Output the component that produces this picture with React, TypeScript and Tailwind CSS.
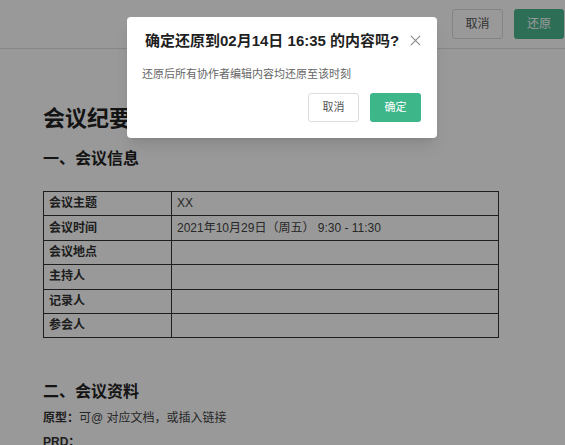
import React from 'react';

const rows = [
  { label: '会议主题', value: 'XX' },
  { label: '会议时间', value: '2021年10月29日（周五） 9:30 - 11:30' },
  { label: '会议地点', value: '' },
  { label: '主持人', value: '' },
  { label: '记录人', value: '' },
  { label: '参会人', value: '' },
];

export default function App() {
  return (
    <div
      className="relative w-[565px] h-[445px] overflow-hidden bg-white text-[#333]"
      style={{ fontFamily: '"Liberation Sans", "Noto Sans CJK SC", sans-serif' }}
    >
      {/* Top bar */}
      <div className="flex h-[49px] items-center justify-end gap-[11px] border-b border-[#e2e2e2] bg-white pr-[1px]">
        <button className="h-[30px] w-[51px] rounded-[3px] border border-[#ddd] bg-white text-[12px] text-[#555]">
          取消
        </button>
        <button className="h-[30px] w-[50px] rounded-[3px] bg-[#4cb890] text-[12px] text-white">
          还原
        </button>
      </div>

      {/* Document */}
      <div className="px-[43px] pt-[55px]">
        <h1 className="text-[22px] font-bold leading-[30px] text-[#222]">会议纪要</h1>
        <h2 className="mt-[13px] text-[16px] font-bold leading-[24px] text-[#222]">一、会议信息</h2>
        <table className="mt-[20px] w-[456px] border-collapse text-[12px]">
          <tbody>
            {rows.map((r) => (
              <tr key={r.label}>
                <td className="h-[24.4px] w-[128px] border border-[#333] px-[5px] py-0 font-bold leading-[23px]">{r.label}</td>
                <td className="h-[24.4px] border border-[#333] px-[5px] py-0 leading-[23px] text-[#444]">{r.value}</td>
              </tr>
            ))}
          </tbody>
        </table>
        <h2 className="mt-[42px] text-[16px] font-bold leading-[24px] text-[#222]">二、会议资料</h2>
        <p className="mt-[3px] text-[12px] leading-[22px] text-[#444]">
          <span className="font-bold text-[#333]">原型：</span>可@ 对应文档，或插入链接
        </p>
        <p className="mt-[2px] text-[12px] font-bold leading-[22px] text-[#333]">PRD：</p>
      </div>

      {/* Overlay */}
      <div className="absolute inset-0 bg-black/40" />

      {/* Dialog */}
      <div className="absolute left-[127px] top-[17px] w-[310px] h-[121px] rounded-[4px] bg-white shadow-lg">
        <div className="flex items-center justify-between pl-[18px] pr-[16px] pt-[12px]">
          <div className="whitespace-nowrap text-[15px] font-bold leading-[24px] text-[#1f1f1f]">确定还原到02月14日 16:35 的内容吗?</div>
          <svg width="11" height="11" viewBox="0 0 12 12" className="mt-[-2px]">
            <path d="M1 1L11 11M11 1L1 11" stroke="#888" strokeWidth="1.2" />
          </svg>
        </div>
        <p className="mt-[13px] pl-[15px] text-[11px] leading-[16px] text-[#666]">还原后所有协作者编辑内容均还原至该时刻</p>
        <div className="mt-[11px] flex justify-end gap-[11px] pr-[16px]">
          <button className="h-[29px] w-[51px] rounded-[3px] border border-[#ddd] bg-white text-[11px] text-[#555]">
            取消
          </button>
          <button className="h-[29px] w-[51px] rounded-[3px] bg-[#3db68a] text-[11px] text-white">
            确定
          </button>
        </div>
      </div>
    </div>
  );
}
